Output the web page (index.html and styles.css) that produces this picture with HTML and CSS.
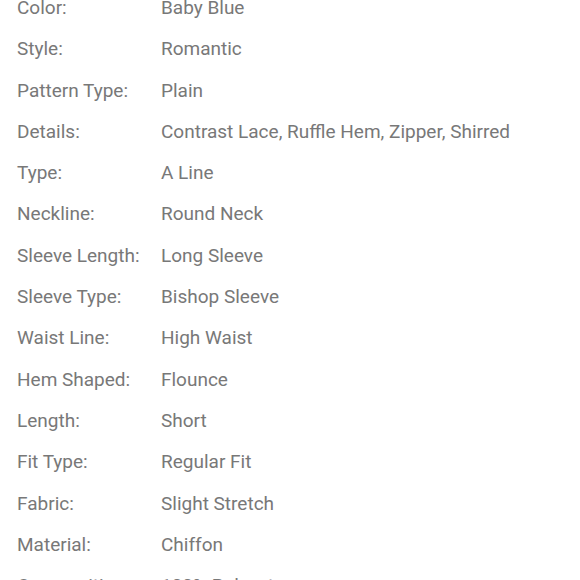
FILE: index.html
```html
<!DOCTYPE html>
<html>
<head>
<meta charset="utf-8">
<link rel="stylesheet" href="styles.css">
</head>
<body>
<div class="specs">
  <div class="row"><span class="label">Color:</span><span class="value">Baby Blue</span></div>
  <div class="row"><span class="label">Style:</span><span class="value">Romantic</span></div>
  <div class="row"><span class="label">Pattern Type:</span><span class="value">Plain</span></div>
  <div class="row"><span class="label">Details:</span><span class="value">Contrast Lace, Ruffle Hem, Zipper, Shirred</span></div>
  <div class="row"><span class="label">Type:</span><span class="value">A Line</span></div>
  <div class="row"><span class="label">Neckline:</span><span class="value">Round Neck</span></div>
  <div class="row"><span class="label">Sleeve Length:</span><span class="value">Long Sleeve</span></div>
  <div class="row"><span class="label">Sleeve Type:</span><span class="value">Bishop Sleeve</span></div>
  <div class="row"><span class="label">Waist Line:</span><span class="value">High Waist</span></div>
  <div class="row"><span class="label">Hem Shaped:</span><span class="value">Flounce</span></div>
  <div class="row"><span class="label">Length:</span><span class="value">Short</span></div>
  <div class="row"><span class="label">Fit Type:</span><span class="value">Regular Fit</span></div>
  <div class="row"><span class="label">Fabric:</span><span class="value">Slight Stretch</span></div>
  <div class="row"><span class="label">Material:</span><span class="value">Chiffon</span></div>
  <div class="row"><span class="label">Composition:</span><span class="value">100% Polyester</span></div>
</div>
</body>
</html>
```
FILE: styles.css
```css
html, body {
  margin: 0;
  padding: 0;
  background: #ffffff;
  overflow: hidden;
}
.specs {
  margin-top: -13px;
  padding-left: 17px;
  font-family: Roboto, "Noto Sans", sans-serif;
  font-size: 19px;
  color: #787878;
}
.row {
  display: grid;
  grid-template-columns: 144px auto;
  height: 41.3px;
  line-height: 41.3px;
  white-space: nowrap;
}
```
